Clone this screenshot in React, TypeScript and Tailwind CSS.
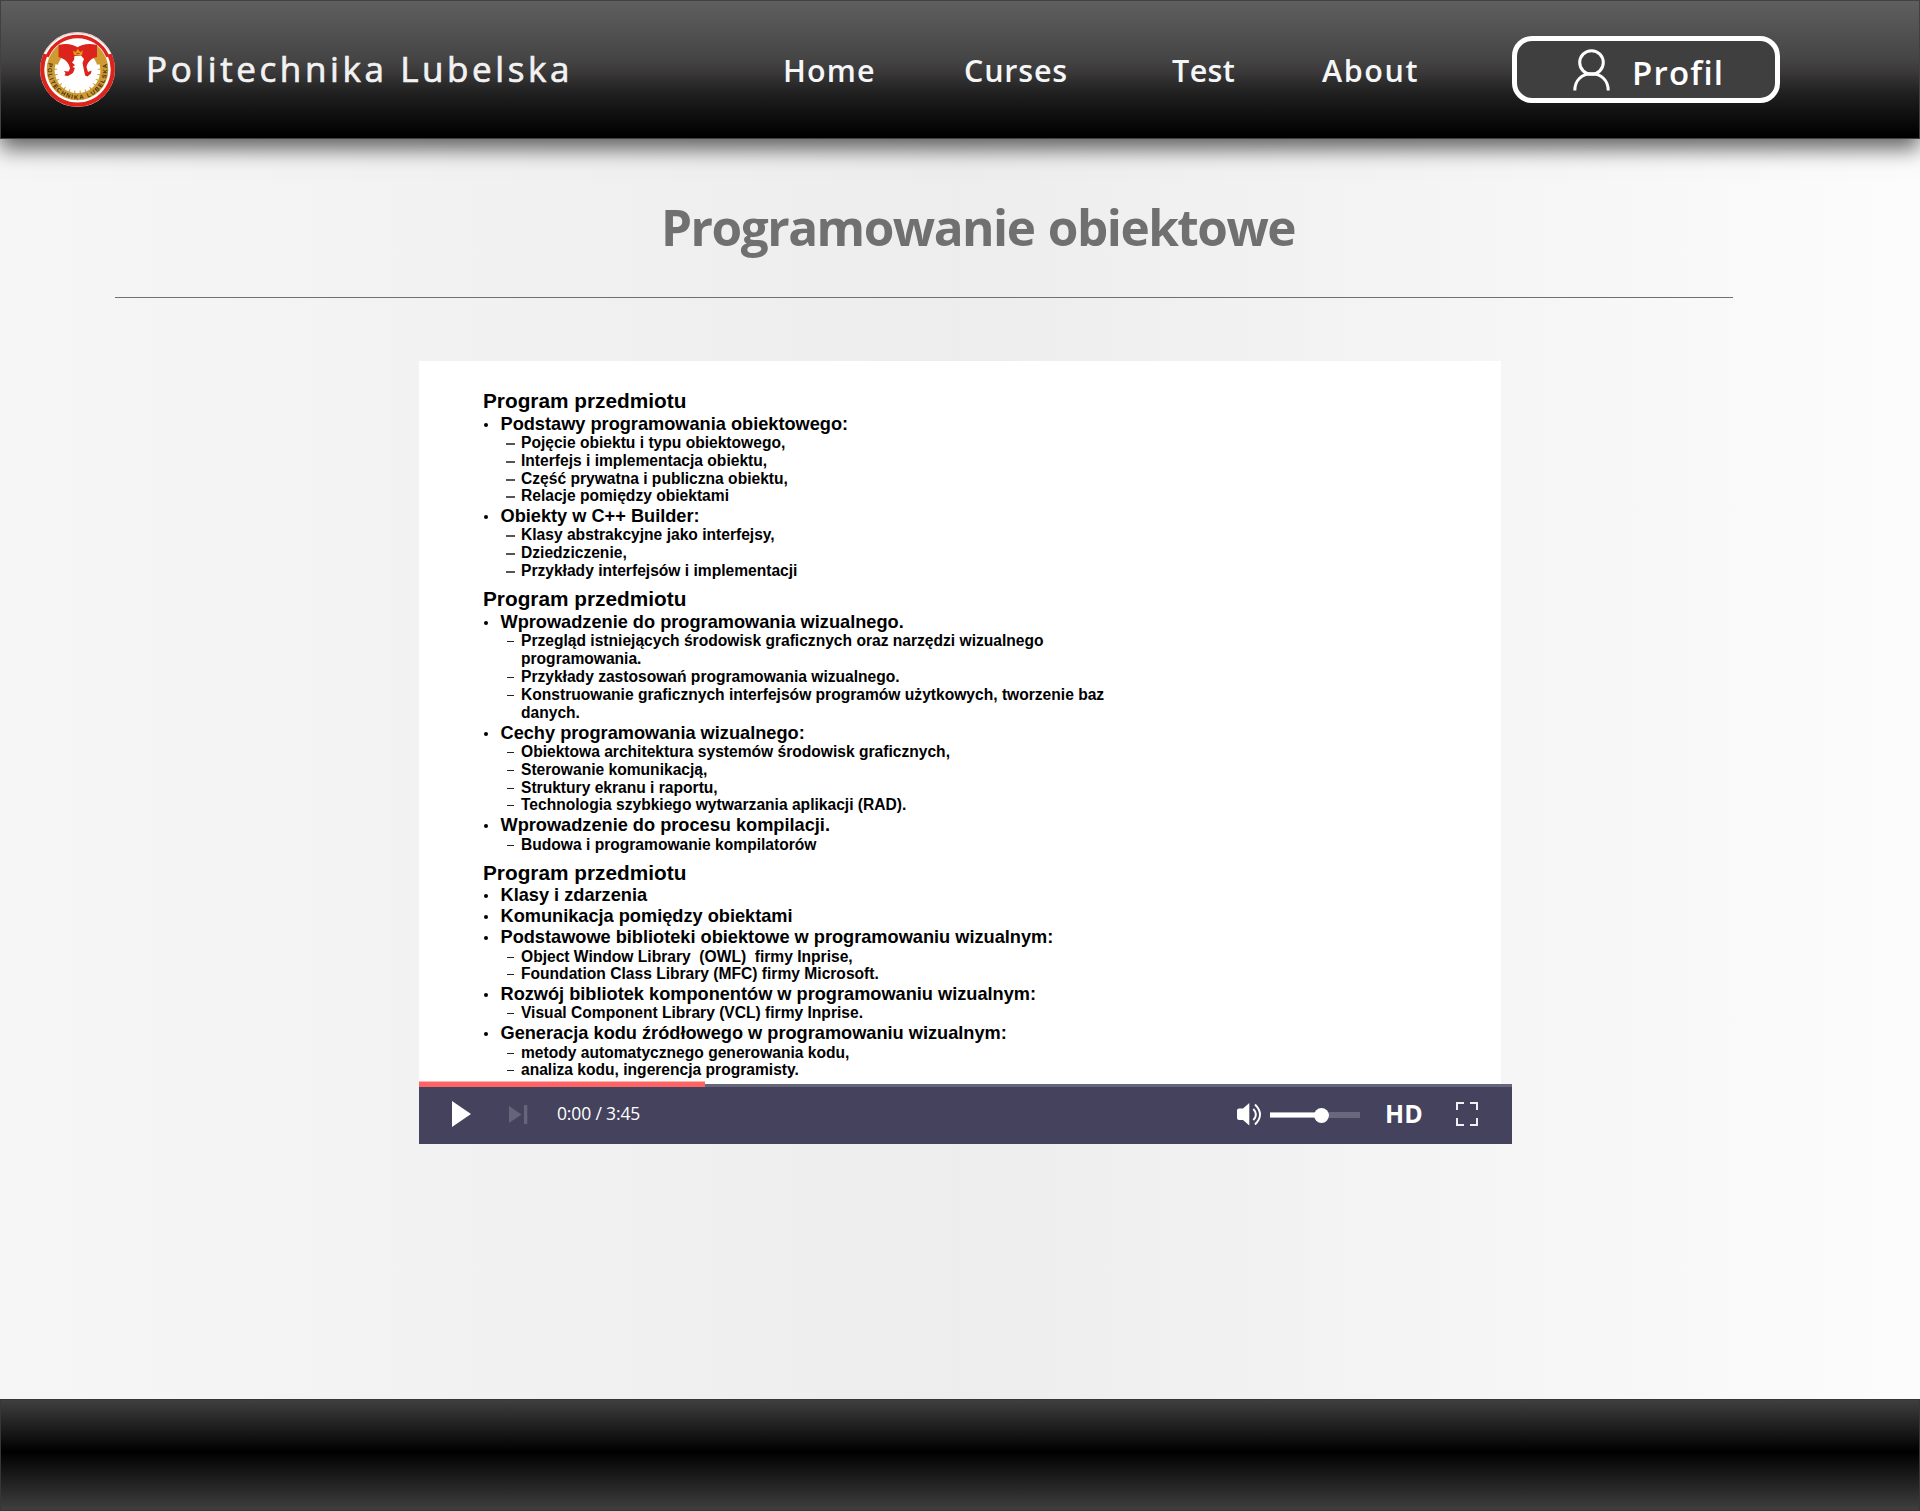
type Kind = 'h' | 'b' | 's' | 'd' | 'c';

// [kind, row height class, text]: h = heading, b = bullet, s / d = dash item, c = continuation line
const rows: [Kind, string, string][] = [
  ['h', 'h-[30px]', 'Program przedmiotu'],
  ['b', 'h-[23px]', 'Podstawy programowania obiektowego:'],
  ['s', 'h-[17px]', 'Pojęcie obiektu i typu obiektowego,'],
  ['s', 'h-[18px]', 'Interfejs i implementacja obiektu,'],
  ['s', 'h-[18px]', 'Część prywatna i publiczna obiektu,'],
  ['s', 'h-[17px]', 'Relacje pomiędzy obiektami'],
  ['b', 'h-[22px]', 'Obiekty w C++ Builder:'],
  ['s', 'h-[17px]', 'Klasy abstrakcyjne jako interfejsy,'],
  ['s', 'h-[18px]', 'Dziedziczenie,'],
  ['s', 'h-[18px]', 'Przykłady interfejsów i implementacji'],
  ['h', 'h-[30px]', 'Program przedmiotu'],
  ['b', 'h-[23px]', 'Wprowadzenie do programowania wizualnego.'],
  ['d', 'h-[17px]', 'Przegląd istniejących środowisk graficznych oraz narzędzi wizualnego'],
  ['c', 'h-[18px]', 'programowania.'],
  ['d', 'h-[18px]', 'Przykłady zastosowań programowania wizualnego.'],
  ['d', 'h-[18px]', 'Konstruowanie graficznych interfejsów programów użytkowych, tworzenie baz'],
  ['c', 'h-[18px]', 'danych.'],
  ['b', 'h-[22px]', 'Cechy programowania wizualnego:'],
  ['d', 'h-[17px]', 'Obiektowa architektura systemów środowisk graficznych,'],
  ['d', 'h-[18px]', 'Sterowanie komunikacją,'],
  ['d', 'h-[18px]', 'Struktury ekranu i raportu,'],
  ['d', 'h-[17px]', 'Technologia szybkiego wytwarzania aplikacji (RAD).'],
  ['b', 'h-[22px]', 'Wprowadzenie do procesu kompilacji.'],
  ['d', 'h-[18px]', 'Budowa i programowanie kompilatorów'],
  ['h', 'h-[30px]', 'Program przedmiotu'],
  ['b', 'h-[22px]', 'Klasy i zdarzenia'],
  ['b', 'h-[21px]', 'Komunikacja pomiędzy obiektami'],
  ['b', 'h-[21px]', 'Podstawowe biblioteki obiektowe w programowaniu wizualnym:'],
  ['d', 'h-[18px]', 'Object Window Library  (OWL)  firmy Inprise,'],
  ['d', 'h-[17px]', 'Foundation Class Library (MFC) firmy Microsoft.'],
  ['b', 'h-[22px]', 'Rozwój bibliotek komponentów w programowaniu wizualnym:'],
  ['d', 'h-[17px]', 'Visual Component Library (VCL) firmy Inprise.'],
  ['b', 'h-[22px]', 'Generacja kodu źródłowego w programowaniu wizualnym:'],
  ['d', 'h-[18px]', 'metody automatycznego generowania kodu,'],
  ['d', 'h-[17px]', 'analiza kodu, ingerencja programisty.'],
];

function Row({ kind, height, text }: { kind: Kind; height: string; text: string }) {
  if (kind === 'h') {
    return (
      <div className={`flex items-end ${height}`}>
        <span className="text-[20.8px] leading-[22px] whitespace-pre">{text}</span>
      </div>
    );
  }
  if (kind === 'b') {
    return (
      <div className={`flex items-end ${height}`}>
        <span className="mb-[8px] ml-[1px] h-[4px] w-[4px] rounded-full bg-black" />
        <span className="ml-[12.5px] text-[18.2px] leading-[21px] whitespace-pre">{text}</span>
      </div>
    );
  }
  return (
    <div className={`flex items-end pl-[23px] ${height}`}>
      <span className="flex w-[15px] pb-[7px]">
        {kind === 's' && <span className="h-[2px] w-[9px] bg-[#555]" />}
        {kind === 'd' && <span className="mb-px ml-[1px] h-px w-[7px] bg-[#222]" />}
      </span>
      <span className="text-[15.6px] leading-[19px] whitespace-pre">{text}</span>
    </div>
  );
}

function Logo() {
  const teeth = Array.from({ length: 15 }, (_, i) => -10 + i * (200 / 14));
  return (
    <svg width="75" height="75" viewBox="0 0 75 75" className="shrink-0">
      <circle cx="37.5" cy="37.5" r="37.5" fill="#fff" />
      <path d="M5.5 22.5A35.3 35.3 0 1 0 69.5 22.5" fill="none" stroke="#dc241c" strokeWidth="4.2" />
      <path d="M5 20A37 37 0 0 1 70 20" fill="none" stroke="#e58a86" strokeWidth="0.6" />
      <circle cx="37.5" cy="37.5" r="30.8" fill="#cf9a31" />
      <path d="M18 14L22 9Q37.5 2 53 9L57 14Q48 11 37.5 15Q27 11 18 14Z" fill="#fff" />
      <path d="M7.6 23.5A33 33 0 0 1 67.4 23.5" fill="none" stroke="#dc241c" strokeWidth="3.4" />
      <path d="M3.5 22.8L9 24.3M71.5 22.8L66 24.3" stroke="#dc241c" strokeWidth="2.2" />
      <circle cx="37.5" cy="38.3" r="20.3" fill="#fff" />
      {teeth.map((a) => (
        <rect key={a} x="55.5" y="36.1" width="4.8" height="4.4" fill="#fff" transform={`rotate(${a} 37.5 38.3)`} />
      ))}
      <path
        d="M18.500 13C26 11 33 12 37.500 15.500C42 12 49 11 57 13V25C51.500 26 47.500 30 46.500 35L48 40L51.500 38.500L51 41.500L47.500 44.500L43 42.500L42 30H36L35 36L33 41L28 44L24.500 43.500L25.500 41L24 39L28.500 39.500L30 36.500C29 31 25 26.500 18.500 25Z"
        fill="#dc241c"
      />
      <path d="M34.500 24L41 23.500L44 27L42.500 31L43.500 36L45 43L42 50H32L31 43.500L34.500 39.500L35 36L32.500 35L35 33L32 30.500L34 28Z" fill="#fff" />
      <path d="M34 23L33 18.500L35.500 20.300L37.800 17L40.200 20.300L42.800 18.500L42 23Z" fill="#e0a018" />
      <path d="M36.300 21.500H39.500" stroke="#b84a10" strokeWidth="1.2" />
      <path id="seal-arc" d="M9.3 28.3A29.7 29.7 0 1 0 65.7 28.3" fill="none" />
      <text fill="#40301a" fontSize="6" className="font-['Liberation_Sans'] font-bold">
        <textPath href="#seal-arc" startOffset="2.5" textLength="106" lengthAdjust="spacing">
          POLITECHNIKA LUBELSKA
        </textPath>
      </text>
    </svg>
  );
}

function Header() {
  return (
    <header className="relative z-10 flex h-[139px] items-center border border-[#414141] bg-[linear-gradient(to_bottom,#5f5f5f_0%,#464545_42%,#3a3839_52%,#1f1f1f_68%,#000_98%)] pl-[39px] text-[#f4f6f7] shadow-[0_10px_20px_rgba(0,0,0,0.6)]">
      <Logo />
      <div className="mb-[1px] ml-[31px] w-[637px] text-[35px] tracking-[3.6px] whitespace-nowrap text-[#f2f2f2] [-webkit-text-stroke:0.7px_#f2f2f2]">
        Politechnika Lubelska
      </div>
      <nav className="flex pt-[2px] text-[30.5px] font-semibold whitespace-nowrap">
        <a className="w-[181px] tracking-[1.1px]">Home</a>
        <a className="w-[208px] tracking-[0.8px]">Curses</a>
        <a className="w-[150px] tracking-[0.4px]">Test</a>
        <a className="w-[190px] tracking-[1.6px]">About</a>
      </nav>
      <button className="flex h-[67px] w-[268px] shrink-0 items-center rounded-[20px] border-[5px] border-white bg-[#3f3f3f] text-white">
        <svg width="38" height="42" viewBox="0 0 38 42" className="ml-[56px] shrink-0" fill="none" stroke="#fff" strokeWidth="3">
          <circle cx="18.5" cy="13.5" r="11.8" />
          <path d="M1.8 41.5C1.8 31 9 24.8 18.5 24.8S35.2 31 35.2 41.5" />
        </svg>
        <span className="ml-[21px] pt-[7px] text-[33px] font-semibold tracking-[1.2px] whitespace-nowrap">Profil</span>
      </button>
    </header>
  );
}

function Controls() {
  return (
    <div className="relative flex h-[60px] w-[1093px] items-center border-t-[3px] border-[#66667a] bg-[#44425c] pb-[3px] text-white">
      <div className="absolute -top-[6px] left-0 h-[6px] w-[286px] border-t border-[#ffb4b4] bg-[#ff6464]" />
      <svg width="19" height="26" viewBox="0 0 19 26" className="ml-[33px] shrink-0">
        <path d="M0 0L19 13L0 26Z" fill="#fff" />
      </svg>
      <svg width="19" height="19" viewBox="0 0 19 19" className="ml-[38px] shrink-0" fill="#66647a">
        <path d="M0 1L12.5 9.5L0 18ZM15 0H18.3V19H15Z" />
      </svg>
      <span className="mb-[2px] ml-[29px] w-[680px] text-[17.5px] tracking-[-0.15px] whitespace-nowrap">0:00 / 3:45</span>
      <svg width="25" height="23" viewBox="0 0 25 23" className="shrink-0">
        <path d="M2 5.5H6L12.3 0V22.5L6 17H2Q0 17 0 15V7.5Q0 5.5 2 5.5Z" fill="#fff" />
        <path d="M16.3 6Q21.5 11.3 16.3 17M18 1.5Q28 11.5 18 21.5" fill="none" stroke="#fff" strokeWidth="1.9" />
      </svg>
      <div className="mt-[2px] ml-[8px] flex h-[15px] w-[90px] shrink-0 items-center">
        <span className="h-[6px] w-[45px] border-y border-[#b3b0bf] bg-white" />
        <span className="-ml-[1px] h-[15px] w-[15px] shrink-0 rounded-full bg-white" />
        <span className="h-[6px] flex-1 bg-[#69677d]" />
      </div>
      <span className="ml-[25px] w-[71px] text-[25px] font-bold">HD</span>
      <svg width="22" height="24" viewBox="0 0 22 24" className="shrink-0" fill="none" stroke="#f0f0f4" strokeWidth="2">
        <path d="M1 8V1H8M14 1H21V8M21 16V23H14M8 23H1V16" />
      </svg>
    </div>
  );
}

export default function App() {
  return (
    <div className="flex h-[1511px] w-[1920px] flex-col overflow-hidden bg-[linear-gradient(to_right,#f6f6f6,#ededed_50%,#fcfcfc)] font-['Open_Sans',sans-serif]">
      <Header />
      <main className="flex flex-1 flex-col">
        <h1 className="mt-[54px] ml-[661px] text-[49.5px] leading-[68px] font-bold tracking-[-1.5px] [word-spacing:2px] whitespace-nowrap text-[#707070]">
          Programowanie obiektowe
        </h1>
        <div className="mt-[36px] ml-[115px] h-px w-[1618px] bg-[#707070]" />
        <section className="mt-[63px] ml-[419px]">
          <div className="h-[723px] w-[1082px] bg-white pt-[21px] pl-[64px] font-['Liberation_Sans',sans-serif] font-bold text-black">
            {rows.map(([kind, height, text], i) => (
              <Row key={i} kind={kind} height={height} text={text} />
            ))}
          </div>
          <Controls />
        </section>
      </main>
      <footer className="h-[112px] border border-[#363636] bg-[linear-gradient(to_bottom,#3f3f3f,#000_47%,#3f3f3f)]" />
    </div>
  );
}
